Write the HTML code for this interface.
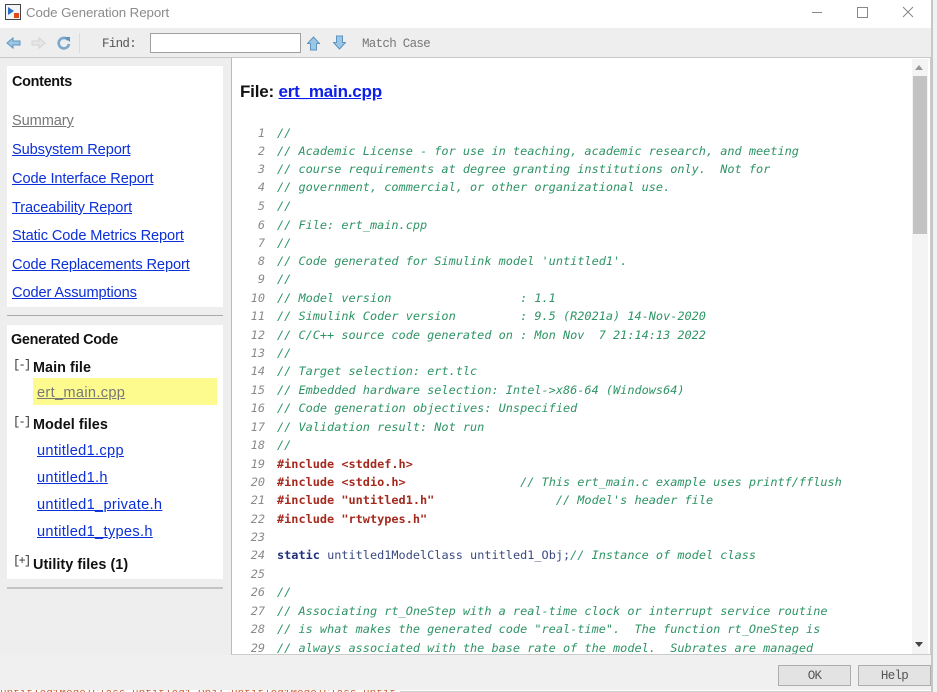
<!DOCTYPE html>
<html><head><meta charset="utf-8"><style>
html,body{margin:0;padding:0;background:#fff}
#w{position:relative;width:937px;height:692px;overflow:hidden;background:#fff;font-family:"Liberation Sans",sans-serif}
#w div,#w svg,#w a{position:absolute;white-space:pre}
a{color:#0b2fd8;text-decoration:underline}
.n{left:12px;font-size:14.6px;line-height:18px;letter-spacing:-.1px;margin-top:1px}
.b{font-weight:bold;color:#111;font-size:14.4px;line-height:18px;letter-spacing:-.3px}
.s{letter-spacing:.05px}
.t{font-family:"Liberation Mono",monospace;font-size:12.5px;letter-spacing:-.7px;color:#333;line-height:14px;top:0}
.br{font-family:"Liberation Mono",monospace;font-size:12px;letter-spacing:-1.7px;color:#333;line-height:14px}
.f{left:37px;font-size:14.6px;line-height:18px;letter-spacing:.32px}
.l{font-family:"DejaVu Sans Mono",monospace;font-size:11.88px;line-height:18px;left:277px;font-style:italic;color:#2e9466}
.g{left:239px;width:26px;text-align:right;font-family:"DejaVu Sans Mono",monospace;font-size:11.88px;line-height:18px;font-style:italic;color:#8a8a8a}
.p{font-style:normal;font-weight:bold;color:#a52a1e}
.k{font-style:normal;font-weight:bold;color:#1f2f7a}
.v{font-style:normal;color:#3a4a80}
</style></head><body><div id="w">
<div style="left:0;top:28px;width:931px;height:627px;background:#eeeeee"></div>
<div style="left:0;top:655px;width:931px;height:35px;background:#f0f0f0"></div>
<div style="left:0;top:57px;width:931px;height:1px;background:#c8c8c8"></div>
<div style="left:931px;top:0;width:2px;height:692px;background:#c6c6c6"></div>
<div style="left:933px;top:0;width:4px;height:692px;background:#f2f2f2"></div>
<div style="left:400px;top:691px;width:531px;height:1px;background:#d0d0d0"></div>
<div style="left:0;top:690px;width:396px;height:2px;overflow:hidden;color:#c8602e;font:11px 'Liberation Mono',monospace;line-height:9px">untitled1ModelClass untitled1_Obj; untitled1ModelClass untitled1_Obj; untitled1_Obj</div>

<svg style="left:5px;top:4px" width="17" height="17" viewBox="0 0 17 17"><rect x=".5" y=".5" width="15" height="15" fill="#f4f4f4" stroke="#444"/><path d="M3 3l6 4-6 4z" fill="#2a6fc0"/><rect x="9" y="9" width="5" height="5" fill="#e2491a"/></svg>
<div style="left:26px;top:4px;font-size:13.3px;line-height:18px;color:#8b8b8b;letter-spacing:-.08px">Code Generation Report</div>
<div style="left:812px;top:12px;width:10px;height:1px;background:#888"></div>
<div style="left:857px;top:7px;width:9px;height:9px;border:1px solid #888"></div>
<svg style="left:902px;top:6px" width="12" height="12" viewBox="0 0 12 12"><path d="M1 1l10 10M11 1L1 11" stroke="#888" stroke-width="1" fill="none"/></svg>

<svg style="left:6px;top:36px" width="15" height="14" viewBox="0 0 15 14"><path d="M1 7l6-5v3h7v4H7v3z" fill="#9cc6e4" stroke="#5b94c0"/></svg>
<svg style="left:31px;top:36px" width="15" height="14" viewBox="0 0 15 14"><path d="M14 7L8 2v3H1v4h7v3z" fill="#e6e6e6" stroke="#d4d4d4"/></svg>
<svg style="left:56px;top:35px" width="15" height="16" viewBox="0 0 15 16"><path d="M12 5a5.200 5.200 0 1 0 1 4" fill="none" stroke="#7ba8cc" stroke-width="2.600"/><path d="M8 2l6 0 0 5z" fill="#5b94c0"/></svg>
<div style="left:79px;top:33px;width:1px;height:20px;background:#dcdcdc"></div>
<div class="t" style="left:102px;top:37px;color:#555">Find:</div>
<div style="left:150px;top:33px;width:149px;height:18px;background:#fff;border:1px solid #a0a0a0"></div>
<svg style="left:307px;top:36px" width="13" height="15" viewBox="0 0 13 15"><path d="M6.500 1L12.500 7.500H9.500V14H3.500V7.500H.5z" fill="#9cc6e4" stroke="#5b94c0"/></svg>
<svg style="left:333px;top:35px" width="13" height="15" viewBox="0 0 13 15"><path d="M6.500 14L12.500 7.500H9.500V1H3.500V7.500H.5z" fill="#9cc6e4" stroke="#5b94c0"/></svg>
<div class="t" style="left:362px;top:37px;color:#777">Match Case</div>

<div style="left:7px;top:66px;width:216px;height:241px;background:#fff"></div>
<div class="b" style="left:12px;top:73px">Contents</div>
<div class="n" style="top:111px;color:#777;text-decoration:underline">Summary</div>
<a class="n" style="top:140px">Subsystem Report</a>
<a class="n" style="top:169px">Code Interface Report</a>
<a class="n" style="top:198px">Traceability Report</a>
<a class="n" style="top:226px">Static Code Metrics Report</a>
<a class="n" style="top:255px">Code Replacements Report</a>
<a class="n" style="top:283px">Coder Assumptions</a>
<div style="left:7px;top:315px;width:216px;height:1px;background:#aaa"></div>
<div style="left:7px;top:325px;width:216px;height:254px;background:#fff"></div>
<div class="b" style="left:11px;top:331px">Generated Code</div>
<div class="br" style="left:13px;top:358px">[-]</div>
<div class="b s" style="left:33px;top:359px">Main file</div>
<div style="left:33px;top:378px;width:184px;height:27px;background:#fdfb8e"></div>
<div class="f" style="top:384px;color:#777;text-decoration:underline">ert_main.cpp</div>
<div class="br" style="left:13px;top:415px">[-]</div>
<div class="b s" style="left:33px;top:416px">Model files</div>
<a class="f" style="top:442px">untitled1.cpp</a>
<a class="f" style="top:469px">untitled1.h</a>
<a class="f" style="top:496px">untitled1_private.h</a>
<a class="f" style="top:523px">untitled1_types.h</a>
<div class="br" style="left:13px;top:554px">[+]</div>
<div class="b s" style="left:33px;top:556px">Utility files (1)</div>
<div style="left:7px;top:587px;width:216px;height:2px;background:#c4c4c4"></div>

<div style="left:231px;top:58px;width:698px;height:596px;background:#fff;border-left:1px solid #bbb;border-bottom:1px solid #ccc;border-right:1px solid #ccc"></div>
<div style="left:240px;top:82px;font-size:17px;line-height:20px;font-weight:bold;color:#111;letter-spacing:-.2px">File: <a style="position:static;color:#0b1fe8">ert_main.cpp</a></div>

<div style="left:912px;top:59px;width:16px;height:595px;background:#f4f4f4"></div>
<div style="left:913px;top:76px;width:14px;height:158px;background:#c2c2c2"></div>
<svg style="left:914px;top:64px" width="10" height="7"><path d="M1 6l4-5 4 5z" fill="#999"/></svg>
<svg style="left:914px;top:641px" width="10" height="7"><path d="M1 1l4 5 4-5z" fill="#444"/></svg>

<div class="g" style="top:124px">1</div><div class="l" style="top:124px">//</div>
<div class="g" style="top:142px">2</div><div class="l" style="top:142px">// Academic License - for use in teaching, academic research, and meeting</div>
<div class="g" style="top:160px">3</div><div class="l" style="top:160px">// course requirements at degree granting institutions only.  Not for</div>
<div class="g" style="top:178px">4</div><div class="l" style="top:178px">// government, commercial, or other organizational use.</div>
<div class="g" style="top:197px">5</div><div class="l" style="top:197px">//</div>
<div class="g" style="top:216px">6</div><div class="l" style="top:216px">// File: ert_main.cpp</div>
<div class="g" style="top:234px">7</div><div class="l" style="top:234px">//</div>
<div class="g" style="top:252px">8</div><div class="l" style="top:252px">// Code generated for Simulink model 'untitled1'.</div>
<div class="g" style="top:270px">9</div><div class="l" style="top:270px">//</div>
<div class="g" style="top:289px">10</div><div class="l" style="top:289px">// Model version                  : 1.1</div>
<div class="g" style="top:307px">11</div><div class="l" style="top:307px">// Simulink Coder version         : 9.5 (R2021a) 14-Nov-2020</div>
<div class="g" style="top:326px">12</div><div class="l" style="top:326px">// C/C++ source code generated on : Mon Nov  7 21:14:13 2022</div>
<div class="g" style="top:344px">13</div><div class="l" style="top:344px">//</div>
<div class="g" style="top:362px">14</div><div class="l" style="top:362px">// Target selection: ert.tlc</div>
<div class="g" style="top:381px">15</div><div class="l" style="top:381px">// Embedded hardware selection: Intel-&gt;x86-64 (Windows64)</div>
<div class="g" style="top:399px">16</div><div class="l" style="top:399px">// Code generation objectives: Unspecified</div>
<div class="g" style="top:418px">17</div><div class="l" style="top:418px">// Validation result: Not run</div>
<div class="g" style="top:436px">18</div><div class="l" style="top:436px">//</div>
<div class="g" style="top:455px">19</div><div class="l p" style="top:455px">#include &lt;stddef.h&gt;</div>
<div class="g" style="top:473px">20</div><div class="l" style="top:473px"><span class="p">#include &lt;stdio.h&gt;</span>                // This ert_main.c example uses printf/fflush</div>
<div class="g" style="top:491px">21</div><div class="l" style="top:491px"><span class="p">#include "untitled1.h"</span>                 // Model's header file</div>
<div class="g" style="top:510px">22</div><div class="l p" style="top:510px">#include "rtwtypes.h"</div>
<div class="g" style="top:528px">23</div>
<div class="g" style="top:546px">24</div><div class="l" style="top:546px"><span class="k">static</span> <span class="v">untitled1ModelClass untitled1_Obj;</span>// Instance of model class</div>
<div class="g" style="top:565px">25</div>
<div class="g" style="top:583px">26</div><div class="l" style="top:583px">//</div>
<div class="g" style="top:602px">27</div><div class="l" style="top:602px">// Associating rt_OneStep with a real-time clock or interrupt service routine</div>
<div class="g" style="top:620px">28</div><div class="l" style="top:620px">// is what makes the generated code "real-time".  The function rt_OneStep is</div>
<div class="g" style="top:639px;height:15px;overflow:hidden">29</div><div class="l" style="top:639px;height:15px;overflow:hidden">// always associated with the base rate of the model.  Subrates are managed</div>

<div style="left:778px;top:665px;width:71px;height:19px;background:#e3e3e3;border:1px solid #adadad"></div>
<div class="t" style="left:778px;top:669px;width:73px;text-align:center;color:#555">OK</div>
<div style="left:858px;top:665px;width:71px;height:19px;background:#e3e3e3;border:1px solid #adadad"></div>
<div class="t" style="left:858px;top:669px;width:73px;text-align:center;color:#555">Help</div>
</div></body></html>
